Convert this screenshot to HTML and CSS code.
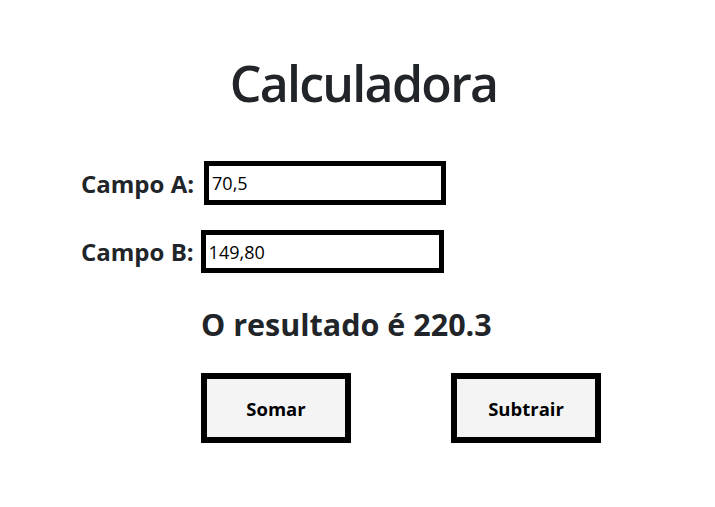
FILE: index.html
```html
<!DOCTYPE html>
<html lang="pt">

<head>
    <meta charset="UTF-8">
    <meta name="viewport" content="width=device-width, initial-scale=1.0">
    <title>Calculadora</title>
    <link rel="stylesheet" href="styles.css">
</head>

<body>
    <div class="app">
        <h1 class="title">Calculadora</h1>
        <div class="form">
            <div class="campo">
                <label for="a">Campo A:</label>
                <input id="a" class="entrada entrada-a" type="text" value="70,5">
            </div>
            <div class="campo">
                <label for="b">Campo B:</label>
                <input id="b" class="entrada entrada-b" type="text" value="149,80">
            </div>
            <div class="resultado">O resultado é 220.3</div>
            <div class="botoes">
                <button class="botao">Somar</button>
                <button class="botao">Subtrair</button>
            </div>
        </div>
    </div>
</body>

</html>
```

FILE: styles.css
```css
* {
    margin: 0;
    padding: 0;
    box-sizing: border-box;
    font-family: 'Open Sans', 'Noto Sans', sans-serif;
}

body {
    background: #ffffff;
    color: #212529;
}

.app {
    display: flex;
    flex-direction: column;
}

.title {
    font-size: 50px;
    font-weight: 600;
    letter-spacing: -1.7px;
    text-align: center;
    padding-left: 12px;
    margin-top: 53px;
    line-height: 60px;
}

.form {
    display: flex;
    flex-direction: column;
    padding-left: 81px;
    margin-top: 48px;
}

.campo {
    display: flex;
    align-items: center;
    gap: 10px;
    margin-bottom: 25px;
}

.campo label {
    font-size: 24px;
    font-weight: 700;
}

.entrada {
    width: 242px;
    height: 44px;
    border: 5px solid #000;
    font-size: 18px;
    padding: 0 3px;
    color: #000;
    outline: none;
}

.entrada-b {
    height: 43px;
    width: 243px;
    margin-left: -3px;
}

.resultado {
    margin-left: 120px;
    margin-top: 5px;
    font-size: 30.5px;
    font-weight: 700;
}

.botoes {
    display: flex;
    gap: 100px;
    margin-left: 120px;
    margin-top: 28px;
}

.botao {
    width: 150px;
    height: 70px;
    border: 6px solid #000;
    background: #f4f4f4;
    font-size: 18.5px;
    font-weight: 700;
    color: #000;
}
```
